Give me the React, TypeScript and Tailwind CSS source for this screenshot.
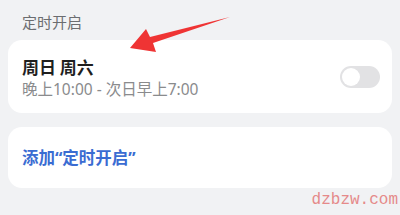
export default function App() {
  const font = { fontFamily: '"Noto Sans CJK SC", "Noto Sans", sans-serif' };
  return (
    <div className="relative w-[400px] h-[215px] overflow-hidden bg-[#f1f2f4] px-2" style={font}>
      <div className="pl-[14px] pt-[12px] h-[40px] text-[15px] leading-[20px] text-[#6b6d70]">定时开启</div>

      <div className="flex items-center justify-between rounded-[14px] bg-white h-[73px] pl-[14px] pr-[12px]">
        <div className="flex flex-col pt-[2px]">
          <span className="text-[17px] leading-[22px] font-bold text-[#1f1f1f]">周日 周六</span>
          <span
            className="mt-[1px] text-[15.5px] leading-[20px] text-[#8a8b8d]"
            style={{ fontFamily: '"Noto Sans", "Noto Sans CJK SC", sans-serif' }}
          >
            晚上10:00 - 次日早上7:00
          </span>
        </div>
        <div className="relative w-[40px] h-[22px] rounded-full bg-[#e2e2e4]">
          <div className="absolute left-[2px] top-[2px] w-[18px] h-[18px] rounded-full bg-white" />
        </div>
      </div>

      <div className="mt-[14px] flex items-center rounded-[14px] bg-white h-[61px] pl-[14px]">
        <span
          className="text-[16.5px] leading-[22px] font-bold text-[#3a6cd2]"
          style={{ fontFamily: '"Noto Sans", "Noto Sans CJK SC", sans-serif' }}
        >
          添加“定时开启”
        </span>
      </div>

      <svg className="absolute left-0 top-0" width="400" height="215" viewBox="0 0 400 215">
        <polygon points="230,17 153,43 156,52 130,48 146,29 150,37" fill="#ef3434" />
      </svg>

      <div
        className="absolute right-[2px] top-[189px] text-[16px] leading-[22px] text-[#e58a8a]"
        style={{ fontFamily: '"Liberation Mono", monospace' }}
      >
        dzbzw.com
      </div>
    </div>
  );
}
